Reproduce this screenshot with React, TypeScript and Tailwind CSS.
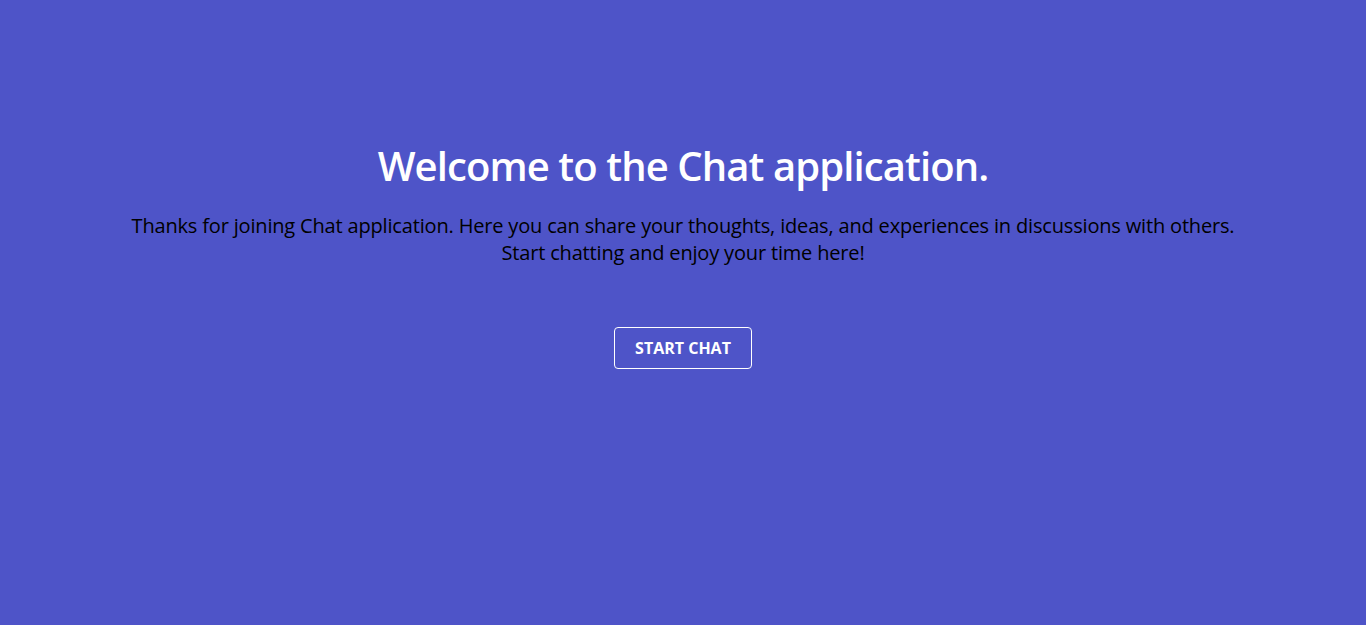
import React from "react";

const App: React.FC = () => {
  return (
    <div className="min-h-screen w-full bg-[#4e54c8] font-['Open_Sans',sans-serif] flex flex-col items-center text-center">
      <div className="mt-[142px] flex flex-col items-center">
        <h1 className="text-[40px] leading-[48px] font-semibold text-white tracking-[-0.9px]">
          Welcome to the Chat application.
        </h1>
        <p className="mt-[22px] text-[20px] leading-[27px] text-black tracking-[-0.17px]">
          Thanks for joining Chat application. Here you can share your thoughts, ideas, and experiences in discussions with others.
          <br />
          Start chatting and enjoy your time here!
        </p>
        <button className="mt-[61px] w-[138px] h-[42px] border border-white rounded-[4px] text-white text-[16px] font-bold uppercase">
          Start Chat
        </button>
      </div>
    </div>
  );
};

export default App;
